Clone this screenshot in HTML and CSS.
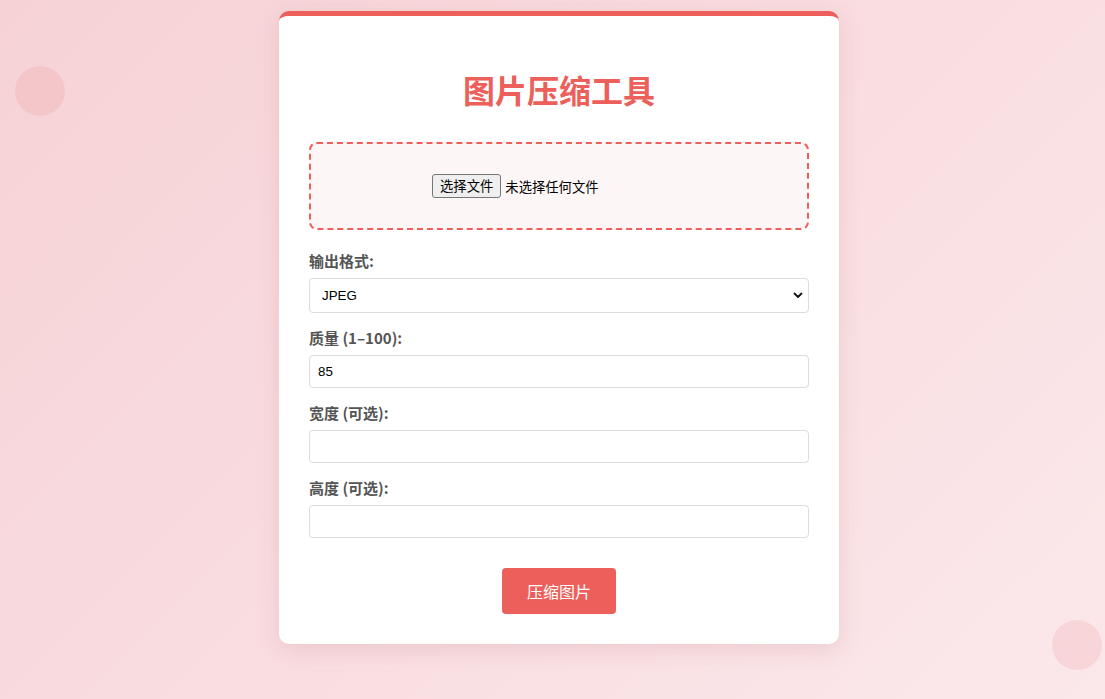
FILE: index.html
```html
<!DOCTYPE html>
<html lang="zh-CN">
<head>
  <meta charset="UTF-8" />
  <meta name="viewport" content="width=device-width, initial-scale=1.0"/>
  <title>图片压缩工具</title>
  <link rel="stylesheet" href="styles.css">
</head>
<body>
  <div class="bubble bubble-left"></div>
  <div class="bubble bubble-right"></div>

  <div class="page">
    <div class="card">
      <h1>图片压缩工具</h1>

      <div class="upload">
        <div class="file-field">
          <input type="file" id="file" accept="image/*" class="file-hidden">
          <label for="file" class="file-btn">选择文件</label>
          <span class="file-name" id="fileName">未选择任何文件</span>
        </div>
      </div>

      <div class="group">
        <label for="format">输出格式:</label>
        <div class="select-wrap">
          <select id="format">
            <option>JPEG</option>
            <option>PNG</option>
            <option>WEBP</option>
          </select>
          <svg class="chevron" width="10" height="7" viewBox="0 0 10 7">
            <path d="M1.5 1.5 L5 5 L8.5 1.5" fill="none" stroke="#111" stroke-width="1.8" stroke-linecap="round" stroke-linejoin="round"/>
          </svg>
        </div>
      </div>

      <div class="group">
        <label for="quality">质量 (1–100):</label>
        <input type="number" id="quality" value="85" min="1" max="100">
      </div>

      <div class="group">
        <label for="width">宽度 (可选):</label>
        <input type="number" id="width">
      </div>

      <div class="group">
        <label for="height">高度 (可选):</label>
        <input type="number" id="height">
      </div>

      <div class="actions">
        <button class="compress">压缩图片</button>
      </div>
    </div>
  </div>

  <script>
    const fileInput = document.getElementById('file');
    const fileName = document.getElementById('fileName');

    fileInput.addEventListener('change', () => {
      fileName.textContent = fileInput.files.length ? fileInput.files[0].name : '未选择任何文件';
    });
  </script>
</body>
</html>
```

FILE: styles.css
```css
:root {
  --accent: #ec5f5a;
  --label: #555;
  --field-border: #dcdcdc;
}

* {
  margin: 0;
  padding: 0;
  box-sizing: border-box;
}

body {
  min-height: 100vh;
  overflow: hidden;
  font-family: "Liberation Sans", "Noto Sans CJK SC", sans-serif;
  background: linear-gradient(135deg, #f6d2d6 0%, #f9dde0 50%, #fbe8ea 100%);
  position: relative;
}

.bubble {
  position: absolute;
  width: 50px;
  height: 50px;
  border-radius: 50%;
}

.bubble-left {
  left: 15px;
  top: 66px;
  background: #f5c6c9;
}

.bubble-right {
  left: 1052px;
  top: 620px;
  background: #f8d5d8;
}

.page {
  display: flex;
  justify-content: center;
  padding: 11px 0 0 13px;
}

.card {
  width: 560px;
  background: #fff;
  border-top: 5px solid var(--accent);
  border-radius: 10px;
  padding: 30px;
  box-shadow: 0 6px 22px rgba(180, 100, 110, 0.18);
  position: relative;
  z-index: 1;
}

h1 {
  margin: 24px 0 34px;
  text-align: center;
  font-family: "Noto Sans CJK SC", sans-serif;
  font-size: 32px;
  line-height: 38px;
  font-weight: 700;
  color: var(--accent);
}

.upload {
  height: 88px;
  border: 2px dashed var(--accent);
  border-radius: 8px;
  background: #fcf6f6;
  display: flex;
  align-items: center;
  justify-content: center;
  margin-bottom: 20px;
}

.file-field {
  width: 254px;
  display: flex;
  align-items: center;
}

.file-hidden {
  display: none;
}

.file-btn {
  font-family: "Noto Sans CJK SC", sans-serif;
  font-size: 13.33px;
  line-height: 20px;
  color: #000;
  background: #efefef;
  border: 1px solid #767676;
  border-radius: 3px;
  padding: 1px 7px;
  margin-right: 4px;
  cursor: pointer;
}

.file-name {
  font-family: "Noto Sans CJK SC", sans-serif;
  font-size: 13.33px;
  color: #000;
}

.group {
  margin-bottom: 14px;
}

.group label {
  display: block;
  font-family: "Noto Sans CJK SC", sans-serif;
  font-size: 15px;
  line-height: 21px;
  font-weight: 700;
  color: var(--label);
  margin-bottom: 7px;
}

.select-wrap {
  position: relative;
}

select,
input[type="number"] {
  width: 100%;
  font-family: "Liberation Sans", sans-serif;
  font-size: 13.33px;
  color: #000;
  background: #fff;
  border: 1px solid var(--field-border);
  border-radius: 4px;
  outline: none;
}

select {
  height: 35px;
  padding: 0 8px 0 12px;
  appearance: none;
  -webkit-appearance: none;
}

input[type="number"] {
  height: 33px;
  padding: 0 8px;
  -moz-appearance: textfield;
}

input[type="number"]::-webkit-inner-spin-button,
input[type="number"]::-webkit-outer-spin-button {
  -webkit-appearance: none;
}

.chevron {
  position: absolute;
  right: 6px;
  top: 14px;
  pointer-events: none;
}

.actions {
  display: flex;
  justify-content: center;
  margin-top: 30px;
}

.compress {
  font-family: "Noto Sans CJK SC", sans-serif;
  font-size: 16px;
  line-height: 22px;
  color: #fff;
  background: var(--accent);
  border: none;
  border-radius: 4px;
  padding: 12px 25px;
  cursor: pointer;
}
```
